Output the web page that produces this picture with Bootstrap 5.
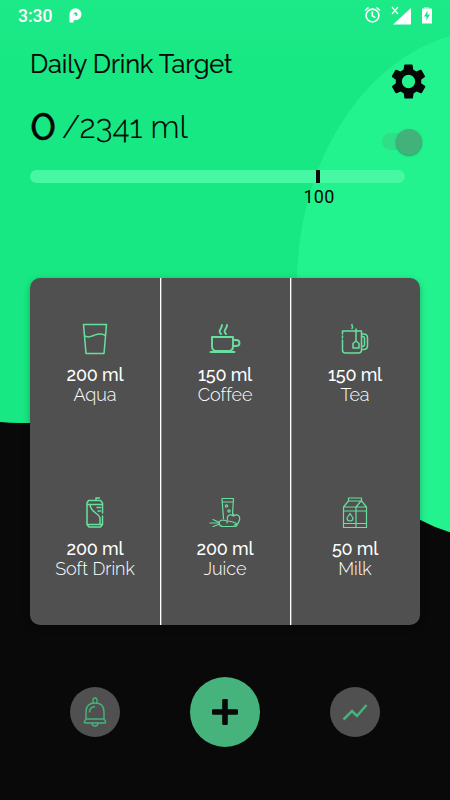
<!DOCTYPE html>
<html lang="en">
<head>
<meta charset="utf-8">
<meta name="viewport" content="width=device-width, initial-scale=1">
<title>Daily Drink Target</title>
<link rel="stylesheet" href="https://cdn.jsdelivr.net/npm/bootstrap@5.3.0/dist/css/bootstrap.min.css">
<style>
body{width:450px;height:800px;background:#090909;color:#050505;font-family:Raleway,Lato,"Open Sans",sans-serif}
svg{display:block;flex:none}
.backdrop{inset:0;z-index:-1}
.statusbar{height:32px;padding:0 17px 0 18px;font:500 17.5px/32px Roboto,sans-serif;color:#fff}
.heading{height:240px;padding:15px 22px 0 30px}
.title{font-size:25.5px;line-height:34px;letter-spacing:-.15px;-webkit-text-stroke:.2px #050505}
.amount{height:56px;margin-top:18px;line-height:56px}
.current{font-size:38px;width:32px;font-weight:500;font-feature-settings:"lnum" 1;-webkit-text-stroke:.4px #050505}
.goal{font-size:31.7px;font-weight:300;-webkit-text-stroke:.15px #050505}
.gear{margin:14px -1px 0 0}
.switch-track{width:39px;height:17px;border-radius:9px;background:#2fdf88;margin:31px 7px 0 0}
.switch-thumb{width:26px;height:26px;right:-1px;top:-4px;background:#42b17a;box-shadow:0 1px 2px #087a4299}
.meter{width:375px;height:13px;border-radius:6.5px;background:#46f8a1;margin-top:15px}
.tick{width:4px;height:13px;margin-left:286px;background:#090909}
.tick-label{width:60px;margin-left:259px;font:18px/24px Roboto,sans-serif;text-align:center;margin-top:2px;letter-spacing:.3px}
.drinks{width:390px;height:347px;margin:6px 0 0 30px;border-radius:10px;background:linear-gradient(90deg,#0000 129.8px,#fff 130.1px 131.3px,#0000 131.6px 259.8px,#fff 260.1px 261.3px,#0000 261.6px) #505050;color:#fff;box-shadow:0 2px 7px #0004}
.drink-col{width:130px}
.drink{height:174px;padding-top:44px}
.drink svg{width:32px;height:34px;fill:none;stroke:#68df9e;stroke-width:1.5;stroke-linejoin:round;stroke-linecap:round}
.drink svg.fine-line{stroke-width:1.2}
.volume{font-size:18px;line-height:22px;font-weight:500;margin-top:8px;letter-spacing:-.2px}
.label{font-size:18px;line-height:20px;font-weight:300;letter-spacing:-.05px;margin-top:-1px}
.actions{margin:52px 70px 0;height:70px}
.action{width:50px;height:50px;background:#505050;border:0}
.action-main{width:70px;height:70px;background:#46b37c;border:0}
</style>
</head>
<body class="position-relative overflow-hidden">
<svg class="backdrop position-absolute" width="450" height="800" aria-hidden="true">
<defs><linearGradient id="sky" x2="0" y2="1"><stop stop-color="#1ce988"/><stop offset=".2" stop-color="#17e883"/><stop offset="1" stop-color="#18e883"/></linearGradient></defs>
<path d="M0 0h450v423H20Q9 423 0 422z" fill="url(#sky)"/><ellipse cx="495" cy="284" rx="198" ry="255" fill="#23f38f"/>
</svg>
<header class="statusbar d-flex align-items-center">
<span>3:30</span>
<svg class="ms-3" width="16" height="18" viewBox="0 0 16 18"><path d="M1.500 15.500V7.300a6 6 0 1 1 6 6H5.500v2.200z" fill="#fff"/><circle cx="7.500" cy="7.200" r="2" fill="#18e783"/><path d="M4.500 7.500l2.500-.6.800 1.400L5.500 10z" fill="#fff"/></svg>
<div class="ms-auto d-flex align-items-center">
<svg width="17" height="18" viewBox="0 0 17 18" fill="none" stroke="#fff" stroke-width="1.600" class="me-n1"><circle cx="8.500" cy="8.500" r="6.400"/><path d="M8.300 4.500v4.300l3 1.800M1 3.500l3.500-3M16 3.500l-3.500-3"/></svg>
<svg style="margin-left:8px" width="24" height="20" viewBox="0 -2 24 20"><path d="M22 0v16.500H4z" fill="#fff"/><path d="M3-1l6 7m0-7l-6 7" stroke="#fff" stroke-width="1.200"/></svg>
<svg class="ms-2" width="12" height="18" viewBox="0 0 12 18"><path d="M3 0h5v2H3z" fill="#7bf3b9"/><path d="M1 1.500h10v15H1z" fill="#fff"/><path d="M6.500 3.500L3 9.500h2.400v4L9 7.500H6.500z" fill="#1ae785"/></svg>
</div>
</header>
<main>
<section class="heading">
<div class="d-flex justify-content-between">
<div>
<div class="title">Daily Drink Target</div>
<div class="amount d-flex align-items-center"><span class="current">0</span><span class="goal">/2341 ml</span></div>
</div>
<div class="d-flex flex-column align-items-end">
<svg class="gear" width="41" height="41" viewBox="0 0 24 24"><path d="M19.400 13a7.700 7.700 0 0 0 0-2l2.100-1.600a.5.5 0 0 0 .1-.6l-2-3.500a.5.5 0 0 0-.6-.2l-2.500 1a7 7 0 0 0-1.700-1l-.4-2.700A.5.5 0 0 0 14 2h-4a.5.5 0 0 0-.5.4l-.4 2.700a8 8 0 0 0-1.700 1l-2.500-1a.5.5 0 0 0-.6.2l-2 3.500a.5.5 0 0 0 .1.6L4.600 11a8 8 0 0 0 0 2l-2.100 1.600a.5.5 0 0 0-.1.6l2 3.500c.1.2.4.3.6.2l2.500-1a7 7 0 0 0 1.700 1l.4 2.700c0 .2.3.4.5.4h4c.2 0 .5-.2.5-.4l.4-2.700a8 8 0 0 0 1.700-1l2.500 1c.2.1.5 0 .6-.2l2-3.500a.5.5 0 0 0-.1-.6zM12 15.900a3.900 3.900 0 1 1 0-7.800 3.900 3.900 0 0 1 0 7.800z" fill="#050505"/></svg>
<div class="switch-track position-relative"><div class="switch-thumb position-absolute rounded-circle"></div></div>
</div>
</div>
<div class="meter d-flex"><div class="tick"></div></div>
<div class="tick-label">100</div>
</section>
<section class="drinks d-flex">
<div class="drink-col">
<div class="drink d-flex flex-column align-items-center"><svg viewBox="0 0 32 34"><path d="M4.500 2.500h23L25 31.500H7zM5.500 13.500c4 3 6 1 9 0s7-3 12 0"/></svg><div class="volume">200 ml</div><div class="label">Aqua</div></div>
<div class="drink d-flex flex-column align-items-center"><svg viewBox="0 0 32 34"><path d="M9.500 4.500h12l2 2.500v1.500H8V7zM8 8.500v20h15.500V20M23.500 17V8.500M8 28.500l2 2.500h11.500l2-2.500M17 4.500V2h3.500M11 8.500c0 8 10 9 10 14v6M18 11.500h3.500M19 15h2.500"/></svg><div class="volume">200 ml</div><div class="label">Soft Drink</div></div>
</div>
<div class="drink-col">
<div class="drink d-flex flex-column align-items-center"><svg viewBox="0 0 32 34"><path stroke-width="1.900" d="M3 15h21v9q0 5-4 5H7q-4 0-4-5zM24 18h3q3.500 0 3.500 3t-3.500 3h-3M1.500 30h24M12 12c-4-4 1-4 1-9M17 12c-4-4 1-4 1-9"/></svg><div class="volume">150 ml</div><div class="label">Coffee</div></div>
<div class="drink d-flex flex-column align-items-center"><svg class="fine-line" viewBox="0 0 32 34"><path d="M13 2.500h11.500l-1 15.500M13 2.500l1.500 20M13.500 6H24M24.500 20c-4-2.500-7 0-6 3.500M24.500 20c4-2.500 7 0 6 4-1 4-3 5-5.500 5M24.500 20v-2M26 30.500H13.500c-5-1-4-6.500.5-6.500l10 2c5 1.500 5 4 2 4.500M9.500 27H1M9.500 28.500L4 30.500M9.500 26L4 23.500M18 25v2"/><circle cx="17.500" cy="10" r="1.200"/><circle cx="20" cy="15" r="1.200"/></svg><div class="volume">200 ml</div><div class="label">Juice</div></div>
</div>
<div class="drink-col">
<div class="drink d-flex flex-column align-items-center"><svg viewBox="0 0 32 34"><path d="M3.500 18v10q0 3 3 3h13q3 0 3-3V9h-19v3M3.500 14v2M23 12h1.500q4 0 4 4v7.500q0 4-4 4H23M23 14.500h.5q2 0 2 2v6q0 2-2.500 2M17 7v12M17 19l-3 2.500V26h6v-4.500zM13 6.500c2-2-1-2 0-4"/></svg><div class="volume">150 ml</div><div class="label">Tea</div></div>
<div class="drink d-flex flex-column align-items-center"><svg class="fine-line" viewBox="0 0 32 34"><path d="M9.500 2h13v3h-13zM9.500 5l-5 6v20.500h23V11l-5-6M4.500 11h23M22 5l-5 6v20.500M4.500 15h23M4.500 27.500h23M11 17.500l-3 4.500q0 3 3 3t3-3z"/></svg><div class="volume">50 ml</div><div class="label">Milk</div></div>
</div>
</section>
<nav class="actions d-flex align-items-center justify-content-between">
<button class="action rounded-circle d-flex align-items-center justify-content-center p-0" aria-label="Reminder"><svg width="26" height="34" viewBox="0 0 26 34" fill="none" stroke="#46b37c" stroke-width="1.400"><path d="M11 8.500V5q0-2 2-2t2 2v3.500M4 24V17q0-9 9-9t9 9v7M4 24h18l1.500 2.500q.5 1.500-1 1.500h-19q-1.500 0-1-1.500zM10 28q0 3 3 3t3-3M7.500 17.500q0-5.500 5.500-6"/></svg></button>
<button class="action-main rounded-circle d-flex align-items-center justify-content-center p-0" aria-label="Add"><svg width="28" height="28" viewBox="0 0 28 28" fill="#090909"><rect x="11.200" y="1" width="5.600" height="26" rx="1.200"/><rect x="1" y="11.200" width="26" height="5.600" rx="1.200"/></svg></button>
<button class="action rounded-circle d-flex align-items-center justify-content-center p-0" aria-label="Statistics"><svg width="26" height="20" viewBox="0 0 26 20"><path d="M1.500 17.500L10 9l5 5L24.500 3" fill="none" stroke="#46b37c" stroke-width="2.500"/></svg></button>
</nav>
</main>
<script src="https://cdn.jsdelivr.net/npm/bootstrap@5.3.0/dist/js/bootstrap.bundle.min.js"></script>
</body>
</html>
